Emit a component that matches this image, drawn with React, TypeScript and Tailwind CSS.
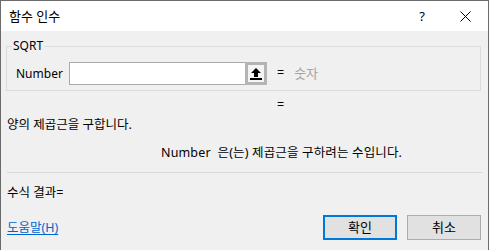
const font = { fontFamily: '"Noto Sans", "Noto Sans CJK KR", sans-serif' };

function UploadIcon() {
  return (
    <svg width="12" height="13" viewBox="0 0 12 13" className="block">
      <path d="M6 1 L11 6 L8 6 L8 10 L4 10 L4 6 L1 6 Z" fill="#000" />
      <rect x="0" y="11" width="12" height="2" fill="#000" />
    </svg>
  );
}

export default function App() {
  return (
    <div
      className="w-[489px] h-[250px] overflow-hidden border-x border-t border-[#6b6b6b] bg-[#f0f0f0] text-[12.5px] text-black flex flex-col"
      style={font}
    >
      {/* Title bar */}
      <div className="h-[30px] bg-white flex items-center shrink-0">
        <span className="pl-[8px] text-[13px] leading-none">함수 인수</span>
        <span className="ml-auto text-[13px] leading-none mr-[35px]">?</span>
        <svg width="11" height="11" viewBox="0 0 11 11" className="mr-[17px]">
          <path d="M0.5 0.5 L10.5 10.5 M10.5 0.5 L0.5 10.5" stroke="#000" strokeWidth="1" />
        </svg>
      </div>

      {/* Argument group */}
      <div className="relative mt-[15px] ml-[5px] w-[475px] h-[45px] border border-[#dcdcdc] shrink-0">
        <span className="absolute left-[5px] top-[-9px] px-[1px] bg-[#f0f0f0] text-[12px] leading-[16px]">SQRT</span>
        <div className="flex items-center pl-[9px] pt-[15px]">
          <span className="w-[53px] text-[12px] leading-[16px]">Number</span>
          <div className="w-[176px] h-[23px] bg-white border border-[#a9a9a9] border-r-0" />
          <div className="w-[22px] h-[23px] border-[3px] border-[#b4b4b4] bg-[#f4f4f4] flex items-center justify-center">
            <UploadIcon />
          </div>
          <span className="ml-[10px]">=</span>
          <span className="ml-[10px] text-[13px] text-[#a5a5a5]">숫자</span>
        </div>
      </div>

      <div className="mt-[6px] h-[16px] leading-[16px] pl-[276px] shrink-0">=</div>

      <div className="mt-[4px] h-[16px] leading-[16px] pl-[6px] shrink-0">양의 제곱근을 구합니다.</div>

      <div className="mt-[12px] h-[16px] leading-[16px] pl-[160px] shrink-0 whitespace-pre tracking-[0.15px]">
        Number  은(는) 제곱근을 구하려는 수입니다.
      </div>

      <div className="mt-[11px] mx-[6px] h-px bg-[#d9d9d9] shrink-0" />

      <div className="mt-[12px] h-[16px] leading-[16px] pl-[6px] shrink-0">수식 결과=</div>

      {/* Footer */}
      <div className="mt-[14px] flex items-center pl-[6px] pr-[7px] shrink-0">
        <a className="text-[#0066cc] underline underline-offset-2 leading-[16px]">도움말(H)</a>
        <button className="ml-auto w-[74px] h-[25px] bg-[#e1e1e1] border-2 border-[#0078d7] text-[13px] leading-none">
          확인
        </button>
        <button className="ml-[10px] w-[74px] h-[25px] bg-[#e1e1e1] border border-[#adadad] text-[13px] leading-none">
          취소
        </button>
      </div>
    </div>
  );
}
